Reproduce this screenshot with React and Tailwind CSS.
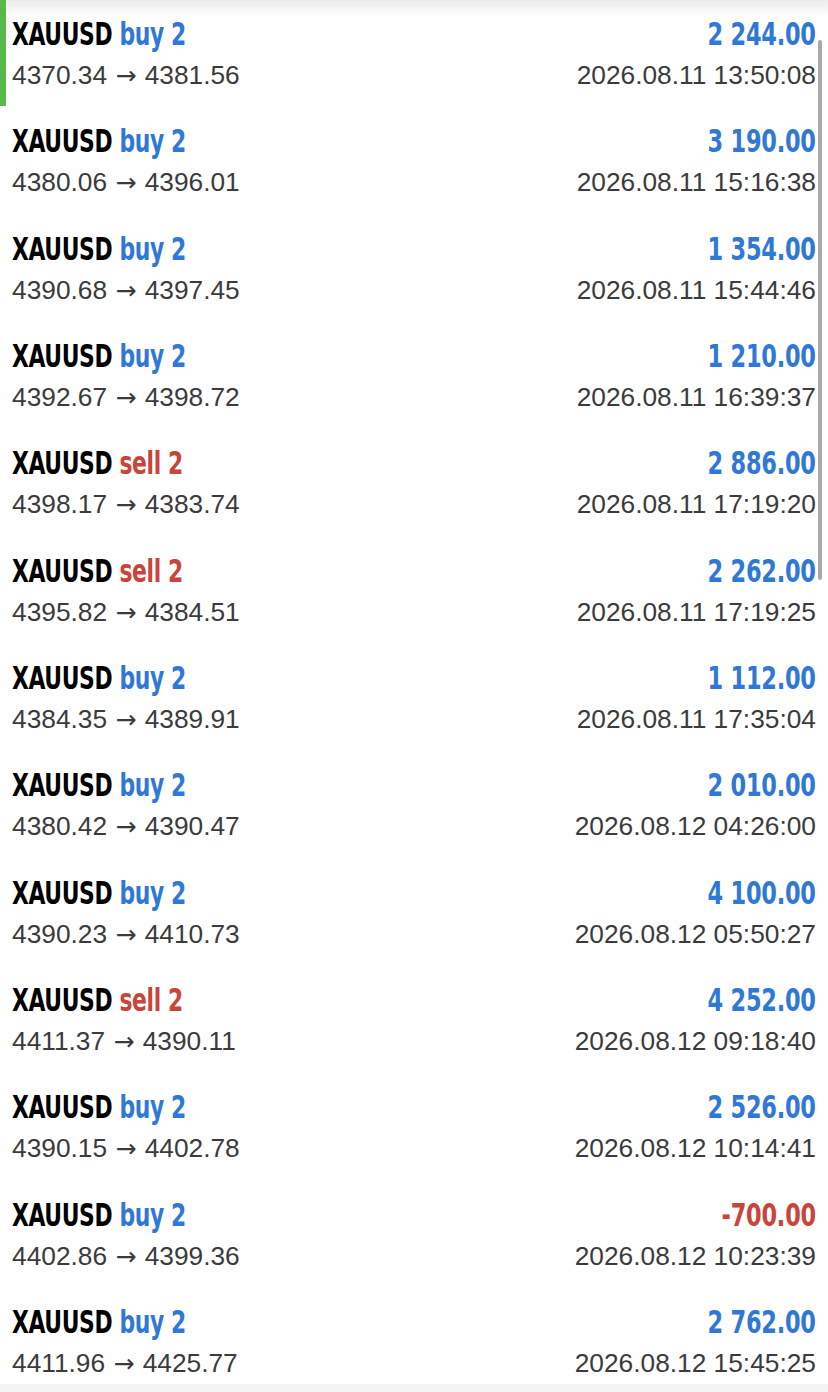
import React from 'react';

const trades = [
  { side: 'buy', open: '4370.34', close: '4381.56', profit: '2 244.00', time: '2026.08.11 13:50:08' },
  { side: 'buy', open: '4380.06', close: '4396.01', profit: '3 190.00', time: '2026.08.11 15:16:38' },
  { side: 'buy', open: '4390.68', close: '4397.45', profit: '1 354.00', time: '2026.08.11 15:44:46' },
  { side: 'buy', open: '4392.67', close: '4398.72', profit: '1 210.00', time: '2026.08.11 16:39:37' },
  { side: 'sell', open: '4398.17', close: '4383.74', profit: '2 886.00', time: '2026.08.11 17:19:20' },
  { side: 'sell', open: '4395.82', close: '4384.51', profit: '2 262.00', time: '2026.08.11 17:19:25' },
  { side: 'buy', open: '4384.35', close: '4389.91', profit: '1 112.00', time: '2026.08.11 17:35:04' },
  { side: 'buy', open: '4380.42', close: '4390.47', profit: '2 010.00', time: '2026.08.12 04:26:00' },
  { side: 'buy', open: '4390.23', close: '4410.73', profit: '4 100.00', time: '2026.08.12 05:50:27' },
  { side: 'sell', open: '4411.37', close: '4390.11', profit: '4 252.00', time: '2026.08.12 09:18:40' },
  { side: 'buy', open: '4390.15', close: '4402.78', profit: '2 526.00', time: '2026.08.12 10:14:41' },
  { side: 'buy', open: '4402.86', close: '4399.36', profit: '-700.00', time: '2026.08.12 10:23:39' },
  { side: 'buy', open: '4411.96', close: '4425.77', profit: '2 762.00', time: '2026.08.12 15:45:25' },
];

// condensed look: DejaVu bold squeezed horizontally
const narrow = "font-['DejaVu_Sans_Condensed','DejaVu_Sans',sans-serif]";
const regular = "font-['Liberation_Sans',Arial,sans-serif]";

function TradeRow({ t, active }) {
  const loss = t.profit.startsWith('-');
  return (
    <div className="relative h-[107.33px] pl-3 pr-3 pt-[17px]">
      {active && <div className="absolute left-0 top-0 h-[106px] w-[6px] bg-[#58b84a]" />}
      <div className="flex items-baseline justify-between whitespace-nowrap">
        <div className={`${narrow} inline-block origin-left scale-x-[0.76] text-[32px] font-bold leading-[34px] tracking-[-0.5px] text-black`}>
          XAUUSD{' '}
          <span className={t.side === 'buy' ? 'text-[#2f78d6]' : 'text-[#c9443a]'}>
            {t.side} 2
          </span>
        </div>
        <div
          className={`${narrow} inline-block origin-right scale-x-[0.78] text-[32px] font-bold leading-[34px] tracking-[-0.3px] ${
            loss ? 'text-[#c9443a]' : 'text-[#2f78d6]'
          }`}
        >
          {t.profit}
        </div>
      </div>
      <div className={`${regular} mt-[9px] flex items-baseline justify-between whitespace-nowrap text-[26.3px] leading-[30px] text-[#3b3b3b]`}>
        <span>
          {t.open} <span className="px-[1px] font-['DejaVu_Sans',sans-serif] text-[25px]">→</span> {t.close}
        </span>
        <span>{t.time}</span>
      </div>
    </div>
  );
}

export default function App() {
  return (
    <div className="relative h-[1392px] w-[828px] overflow-hidden bg-white">
      <div className="pointer-events-none absolute inset-x-0 top-0 h-[18px] bg-gradient-to-b from-[#ececec] to-white/0" />
      {trades.map((t, i) => (
        <TradeRow key={i} t={t} active={i === 0} />
      ))}
      <div className="absolute right-[6px] top-[40px] h-[540px] w-[4px] rounded-full bg-[#a9a9a9]" />
      <div className="absolute inset-x-0 bottom-0 h-[8px] bg-[#f4f4f4]" />
    </div>
  );
}
